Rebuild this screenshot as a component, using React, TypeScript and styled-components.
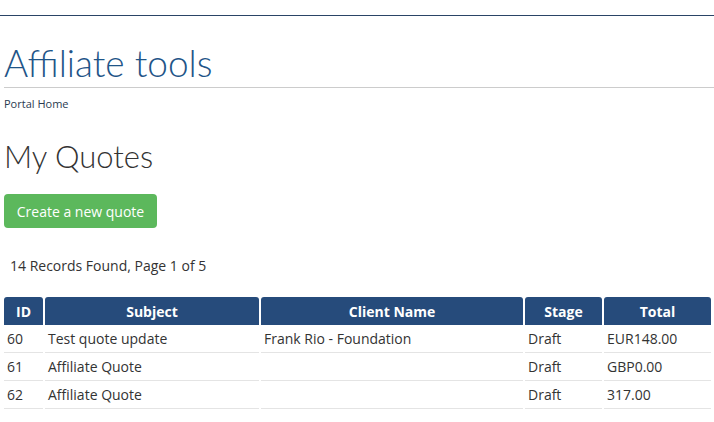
import styled, { createGlobalStyle } from "styled-components";

const GlobalStyle = createGlobalStyle`
    body {
        margin: 0;
        background: #fff;
        font-family: "Open Sans", "Liberation Sans", sans-serif;
        color: #333;
    }
`;

const TopBar = styled.div`
    height: 15px;
    border-bottom: 1px solid #2a4466;
`;

const Page = styled.div`
    padding: 0 0 0 4px;
`;

const BrandTitle = styled.h1`
    margin: 0;
    padding-top: 24px;
    font-family: "Lato", sans-serif;
    font-weight: 300;
    font-size: 37px;
    line-height: 46px;
    color: #1f5588;
    border-bottom: 1px solid #cccccc;
    padding-bottom: 1px;
`;

const Breadcrumb = styled.div`
    font-size: 11px;
    line-height: 14px;
    margin-top: 9px;
    color: #2a3a50;
`;

const PageTitle = styled.h2`
    margin: 27px 0 0;
    font-family: "Lato", sans-serif;
    font-weight: 300;
    font-size: 31px;
    line-height: 36px;
    color: #333;
`;

const Button = styled.button`
    margin-top: 20px;
    height: 34px;
    padding: 0 12px;
    border: none;
    border-radius: 4px;
    background: #5cb85c;
    color: #fff;
    font-family: "Open Sans", sans-serif;
    font-size: 14px;
    width: 153px;
`;

const Records = styled.p`
    margin: 28px 0 0 6px;
    font-size: 14px;
    line-height: 20px;
`;

const Table = styled.table`
    margin: 21px 0 0 -2px;
    border-collapse: separate;
    border-spacing: 2px 0;
    font-size: 14px;
`;

const Th = styled.th<{ $w: number }>`
    width: ${p => p.$w}px;
    height: 28px;
    padding: 0 3px;
    box-sizing: border-box;
    background: #264b7b;
    color: #fff;
    font-weight: 700;
    text-align: center;
    border-radius: 3px 3px 0 0;
`;

const Td = styled.td`
    height: 27px;
    padding: 0 3px;
    border-bottom: 1px solid #e4e4e4;
    color: #333;
    white-space: nowrap;
`;

interface IQuote {
    id: number;
    subject: string;
    client: string;
    stage: string;
    total: string;
}

const quotes: IQuote[] = [
    { id: 60, subject: "Test quote update", client: "Frank Rio - Foundation", stage: "Draft", total: "EUR148.00" },
    { id: 61, subject: "Affiliate Quote", client: "", stage: "Draft", total: "GBP0.00" },
    { id: 62, subject: "Affiliate Quote", client: "", stage: "Draft", total: "317.00" },
];

function App() {
    return (
        <>
            <GlobalStyle />
            <TopBar />
            <Page>
                <BrandTitle>Affiliate tools</BrandTitle>
                <Breadcrumb>Portal Home</Breadcrumb>
                <PageTitle>My Quotes</PageTitle>
                <Button>Create a new quote</Button>
                <Records>14 Records Found, Page 1 of 5</Records>
                <Table>
                    <thead>
                        <tr>
                            <Th $w={39}>ID</Th>
                            <Th $w={214}>Subject</Th>
                            <Th $w={262}>Client Name</Th>
                            <Th $w={77}>Stage</Th>
                            <Th $w={107}>Total</Th>
                        </tr>
                    </thead>
                    <tbody>
                        {quotes.map(q => (
                            <tr key={q.id}>
                                <Td>{q.id}</Td>
                                <Td>{q.subject}</Td>
                                <Td>{q.client}</Td>
                                <Td>{q.stage}</Td>
                                <Td>{q.total}</Td>
                            </tr>
                        ))}
                    </tbody>
                </Table>
            </Page>
        </>
    );
}

export default App;
